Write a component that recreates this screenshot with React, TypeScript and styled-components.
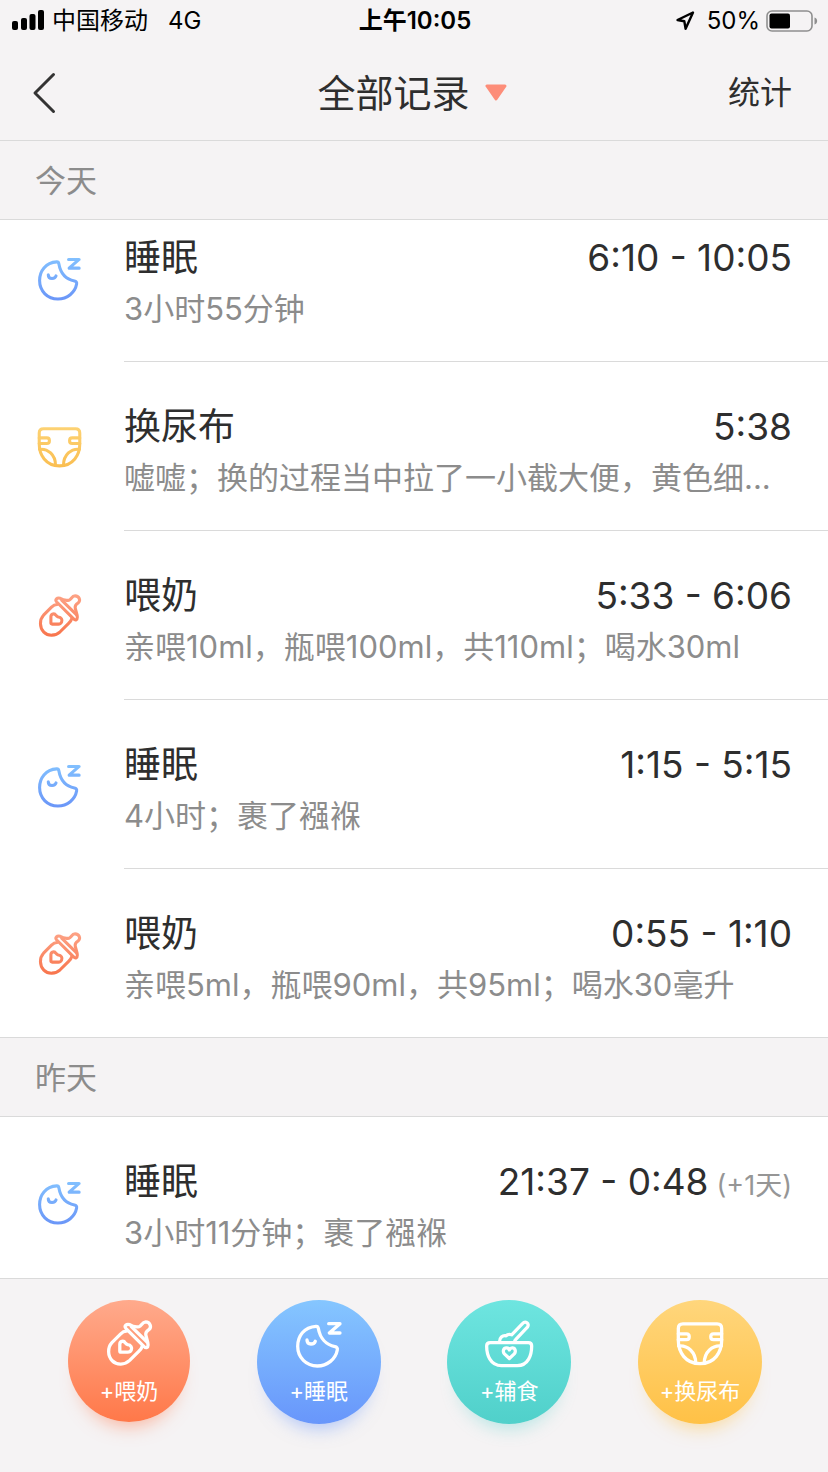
import React, { useId } from "react";
import styled, { createGlobalStyle } from "styled-components";

const GlobalStyle = createGlobalStyle`
  *, *::before, *::after { box-sizing: border-box; }
  body {
    margin: 0;
    background: #f5f3f4;
    color: #2e2e2e;
    font-family: Inter, "Noto Sans CJK SC", sans-serif;
    font-weight: 400;
  }
  button {
    margin: 0;
    padding: 0;
    border: 0;
    background: none;
    color: inherit;
    font: inherit;
    cursor: pointer;
  }
  h1, h2, h3, p, ul { margin: 0; padding: 0; font-weight: inherit; }
  ul { list-style: none; }
`;

const Screen = styled.div`
  display: flex;
  flex-direction: column;
  height: 100vh;
`;

const StatusBar = styled.div`
  display: grid;
  grid-template-columns: 1fr auto 1fr;
  align-items: center;
  height: 42px;
  flex: none;
  padding: 0 10px 0 12px;
  color: #000;
  font-size: 24px;
  line-height: 42px;
`;

const StatusGroup = styled.div<{ $end?: boolean }>`
  display: flex;
  align-items: center;
  justify-content: ${(p) => (p.$end ? "flex-end" : "flex-start")};
  gap: 6px;
`;

const Network = styled.span`
  margin-left: 14px;
`;

const Clock = styled.time`
  font-weight: 600;
`;

const Percent = styled.span`
  margin-left: 6px;
`;

const NavBar = styled.header`
  display: grid;
  grid-template-columns: 1fr auto 1fr;
  align-items: center;
  height: 98px;
  flex: none;
  padding: 3px 36px 0 32px;
`;

const BackButton = styled.button`
  display: flex;
  justify-self: start;
`;

const FilterButton = styled.button`
  display: flex;
  align-items: center;
  gap: 15px;
`;

const Title = styled.h1`
  font-size: 38px;
  line-height: 48px;
`;

const StatsButton = styled.button`
  justify-self: end;
  font-size: 32px;
  line-height: 48px;
`;

const Records = styled.main`
  flex: 1;
  min-height: 0;
  overflow-y: auto;
  scrollbar-width: none;
  background: #fff;
`;

const DayHeading = styled.h2`
  height: 80px;
  padding-left: 35px;
  border-top: 1px solid #dadada;
  border-bottom: 1px solid #dadada;
  background: #f5f3f4;
  color: #8c8c8c;
  font-size: 31px;
  line-height: 80px;
`;

const Row = styled.li<{ $first?: boolean }>`
  display: flex;
  padding-left: 38px;
  --row-top: ${(p) => (p.$first ? "16px" : "43px")};

  &:last-child > div:last-child { border-bottom: 0; }
`;

const RowIcon = styled.div`
  flex: none;
  width: 86px;
  padding-top: calc(var(--row-top) + 20px);
`;

const RowBody = styled.div`
  flex: 1;
  min-width: 0;
  padding: var(--row-top) 36px 30px 0;
  border-bottom: 1px solid #dadada;
`;

const RowHead = styled.div`
  display: flex;
  justify-content: space-between;
  align-items: baseline;
  font-size: 37px;
  line-height: 44px;
  height: 44px;
`;

const RowTitle = styled.h3`
  font-size: 37px;
`;

const DayShift = styled.span`
  margin-left: 8px;
  color: #969696;
  font-size: 27px;
`;

const Detail = styled.p`
  margin-top: 7px;
  overflow: hidden;
  color: #8c8c8c;
  font-size: 31px;
  line-height: 44px;
  white-space: nowrap;
  text-overflow: ellipsis;
`;

const ActionBar = styled.footer`
  display: flex;
  justify-content: space-between;
  align-items: flex-start;
  flex: none;
  height: 194px;
  padding: 21px 66px 0 68px;
  border-top: 1px solid #dadada;
`;

const ActionButton = styled.button<{
  $size: number;
  $from: string;
  $to: string;
  $glow: string;
}>`
  display: flex;
  flex-direction: column;
  align-items: center;
  gap: 9px;
  width: ${(p) => p.$size}px;
  height: ${(p) => p.$size}px;
  padding-top: 20px;
  border-radius: 50%;
  background: linear-gradient(${(p) => p.$from}, ${(p) => p.$to});
  box-shadow: 0 16px 18px -12px ${(p) => p.$glow};
  color: #fff;
  font-size: 22px;
  line-height: 32px;
`;

const Drawing = styled.svg`
  display: block;
  flex: none;
  overflow: visible;
  fill: none;
  stroke-linecap: round;
  stroke-linejoin: round;
`;

type Kind = "sleep" | "diaper" | "milk" | "food";

const shapes: Record<Kind, { box: string; width: number; paths: string[] }> = {
  sleep: {
    box: "0 -2 46 46",
    width: 3.3,
    paths: [
      "M20 4.3C8 5 1.7 14.3 1.7 24.3C1.7 35.7 10.3 44 21.3 44C31.3 44 39.7 37 41.3 28C41.7 26 40.7 25 39 24.7C30 23 24 16 22.3 6.3C22 4.7 21.3 4.2 20 4.3Z",
      "M11 18C11 21 13 22 15 22C17 22 18.7 21.3 19.3 19.3",
      "M32.7 1.7H44L33.3 11H44",
    ],
  },
  diaper: {
    box: "20 23 140 140",
    width: 10,
    paths: [
      "M38 35H142C151 35 156 40 156 49V85C156 120 135 156 90 156C45 156 24 120 24 85V49C24 40 29 35 38 35Z",
      "M24 65H49C60 65 60 83 49 83H24",
      "M156 65H131C120 65 120 83 131 83H156",
      "M25 102C52 99 77 120 77 154",
      "M155 102C128 99 103 120 103 154",
    ],
  },
  milk: {
    box: "18 20 140 140",
    width: 10,
    paths: [
      "M80 54C72 54 68 57 62 63L36 89C22 104 23 130 37 144C51 158 75 157 90 143L116 117C122 111 126 108 128 100",
      "M79 46C72 38 80 31 90 34C96 38 108 42 119 40C127 38 127 27 139 26C152 26 158 41 149 49C143 53 138 56 139 64C140 74 146 84 146 96C146 104 140 107 134 101Z",
      "M95 40L143 87",
      "M64 118C61 118 60 117 60 114V94C60 84 72 82 76 89C78 92 80 94 84 95C94 96 98 104 95 111C93 116 89 118 84 118Z",
    ],
  },
  food: {
    box: "17 24 140 140",
    width: 10,
    paths: [
      "M30 93H146C153 93 156 97 156 103C156 130 146 163 112 163H64C30 163 19 130 19 103C19 97 22 93 30 93Z",
      "M88 141L73 127C67 120 70 109 79 109C84 109 87 112 88 115C89 112 92 109 97 109C106 109 109 120 103 127Z",
      "M58 91C58 78 67 70 78 72C82 68 88 67 95 69L128 35C137 25 151 35 143 46L107 84C105 86 104 88 104 91",
    ],
  },
};

const tints: Record<Kind, [string, string]> = {
  sleep: ["#83c2ff", "#6b97f8"],
  diaper: ["#fdd375", "#fabe50"],
  milk: ["#fda386", "#f8744c"],
  food: ["#6ee3de", "#52d1cb"],
};

function Icon({ kind, size, tinted }: { kind: Kind; size: number; tinted?: boolean }) {
  const id = useId();
  const { box, width, paths } = shapes[kind];
  const [x, y, , h] = box.split(" ").map(Number);
  return (
    <Drawing
      width={size}
      height={size}
      viewBox={box}
      stroke={tinted ? `url(#${id})` : "#fff"}
      strokeWidth={width}
      aria-hidden="true"
    >
      {tinted && (
        <linearGradient id={id} gradientUnits="userSpaceOnUse" x1={x} y1={y} x2={x} y2={y + h}>
          <stop offset="0" stopColor={tints[kind][0]} />
          <stop offset="1" stopColor={tints[kind][1]} />
        </linearGradient>
      )}
      {paths.map((d) => (
        <path key={d} d={d} />
      ))}
    </Drawing>
  );
}

type RecordItem = {
  kind: Kind;
  title: string;
  time: string;
  shift?: string;
  detail: string;
};

const days: { label: string; items: RecordItem[] }[] = [
  {
    label: "今天",
    items: [
      { kind: "sleep", title: "睡眠", time: "6:10 - 10:05", detail: "3小时55分钟" },
      {
        kind: "diaper",
        title: "换尿布",
        time: "5:38",
        detail: "嘘嘘；换的过程当中拉了一小截大便，黄色细...",
      },
      {
        kind: "milk",
        title: "喂奶",
        time: "5:33 - 6:06",
        detail: "亲喂10ml，瓶喂100ml，共110ml；喝水30ml",
      },
      { kind: "sleep", title: "睡眠", time: "1:15 - 5:15", detail: "4小时；裹了襁褓" },
      {
        kind: "milk",
        title: "喂奶",
        time: "0:55 - 1:10",
        detail: "亲喂5ml，瓶喂90ml，共95ml；喝水30毫升",
      },
    ],
  },
  {
    label: "昨天",
    items: [
      {
        kind: "sleep",
        title: "睡眠",
        time: "21:37 - 0:48",
        shift: "(+1天)",
        detail: "3小时11分钟；裹了襁褓",
      },
    ],
  },
];

const actions: {
  kind: Kind;
  label: string;
  size: number;
  from: string;
  to: string;
  glow: string;
}[] = [
  { kind: "milk", label: "+喂奶", size: 122, from: "#ffaa8c", to: "#ff7849", glow: "rgba(255, 120, 73, 0.5)" },
  { kind: "sleep", label: "+睡眠", size: 124, from: "#85c6ff", to: "#6896fb", glow: "rgba(104, 150, 251, 0.5)" },
  { kind: "food", label: "+辅食", size: 124, from: "#6ee5e0", to: "#50d0ca", glow: "rgba(80, 208, 202, 0.4)" },
  { kind: "diaper", label: "+换尿布", size: 124, from: "#ffd67c", to: "#ffc146", glow: "rgba(255, 193, 70, 0.5)" },
];

export default function App() {
  return (
    <>
      <GlobalStyle />
      <Screen>
        <StatusBar>
          <StatusGroup>
            <svg width="34" height="22" viewBox="0 0 34 22" aria-hidden="true">
              <rect x="0" y="11" width="6" height="9" rx="2" />
              <rect x="9" y="8" width="6" height="12" rx="2" />
              <rect x="17.5" y="4" width="6" height="16" rx="2" />
              <rect x="26" y="0" width="6" height="20" rx="2" />
            </svg>
            <span>中国移动</span>
            <Network>4G</Network>
          </StatusGroup>
          <Clock>上午10:05</Clock>
          <StatusGroup $end>
            <svg width="20" height="20" viewBox="0 0 20 20" aria-hidden="true">
              <path
                d="M18 1.5L2.5 9L9.3 10.3L10.6 17.8Z"
                fill="none"
                stroke="#000"
                strokeWidth="2.4"
                strokeLinejoin="round"
              />
            </svg>
            <Percent>50%</Percent>
            <svg width="52" height="23" viewBox="0 0 52 23" aria-hidden="true">
              <rect x="1" y="1" width="45" height="20" rx="5" fill="none" stroke="#8f8f8f" strokeWidth="1.6" />
              <rect x="3.5" y="3.5" width="20.5" height="15" rx="2" />
              <path d="M48.5 7.5C52 8 52 14 48.5 14.5Z" fill="#8f8f8f" />
            </svg>
          </StatusGroup>
        </StatusBar>

        <NavBar>
          <BackButton type="button" aria-label="返回">
            <svg width="24" height="42" viewBox="0 0 24 42" aria-hidden="true">
              <path
                d="M21.5 2.5L3 21L21.5 39.5"
                fill="none"
                stroke="#333"
                strokeWidth="3"
                strokeLinecap="round"
                strokeLinejoin="round"
              />
            </svg>
          </BackButton>
          <FilterButton type="button">
            <Title>全部记录</Title>
            <svg width="22" height="18" viewBox="0 0 22 18" aria-hidden="true">
              <path
                d="M2 2H20L11 15Z"
                fill="#fd8d79"
                stroke="#fd8d79"
                strokeWidth="3"
                strokeLinejoin="round"
              />
            </svg>
          </FilterButton>
          <StatsButton type="button">统计</StatsButton>
        </NavBar>

        <Records>
          {days.map((day, dayIndex) => (
            <section key={day.label}>
              <DayHeading>{day.label}</DayHeading>
              <ul>
                {day.items.map((item, index) => (
                  <Row key={item.time} $first={dayIndex === 0 && index === 0}>
                    <RowIcon>
                      <Icon kind={item.kind} size={43} tinted />
                    </RowIcon>
                    <RowBody>
                      <RowHead>
                        <RowTitle>{item.title}</RowTitle>
                        <div>
                          <time>{item.time}</time>
                          {item.shift && <DayShift>{item.shift}</DayShift>}
                        </div>
                      </RowHead>
                      <Detail>{item.detail}</Detail>
                    </RowBody>
                  </Row>
                ))}
              </ul>
            </section>
          ))}
        </Records>

        <ActionBar>
          {actions.map((action) => (
            <ActionButton
              key={action.kind}
              type="button"
              $size={action.size}
              $from={action.from}
              $to={action.to}
              $glow={action.glow}
            >
              <Icon kind={action.kind} size={46} />
              {action.label}
            </ActionButton>
          ))}
        </ActionBar>
      </Screen>
    </>
  );
}
